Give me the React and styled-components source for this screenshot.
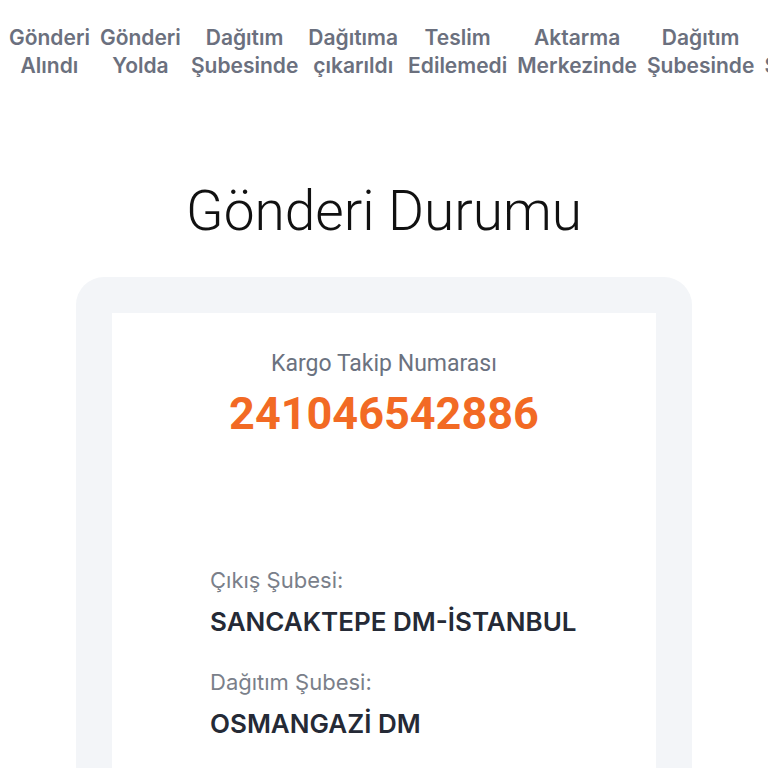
import React from 'react';
import styled, { createGlobalStyle } from 'styled-components';

const GlobalStyle = createGlobalStyle`
  body {
    margin: 0;
    background: #ffffff;
    font-family: 'Inter', 'Noto Sans', sans-serif;
  }
`;

const Page = styled.div`
  width: 768px;
  height: 768px;
  overflow: hidden;
  display: flex;
  flex-direction: column;
`;

const StatusStrip = styled.div`
  display: flex;
  gap: 10px;
  padding: 24px 0 0 9px;
  white-space: nowrap;
`;

const StatusItem = styled.div`
  flex: none;
  text-align: center;
  font-size: 21px;
  font-weight: 600;
  line-height: 28px;
  color: #6b707e;
`;

const Title = styled.h1`
  margin: 99px 0 0;
  text-align: center;
  font-family: 'Roboto', sans-serif;
  font-size: 55px;
  font-weight: 300;
  line-height: 64px;
  color: #111111;
`;

const Frame = styled.div`
  box-sizing: border-box;
  margin: 34px 0 0 76px;
  width: 616px;
  padding: 36px 36px 0;
  background: #f3f5f8;
  border-radius: 28px 28px 0 0;
  flex: 1;
  display: flex;
`;

const Card = styled.div`
  flex: 1;
  background: #ffffff;
  display: flex;
  flex-direction: column;
  padding-top: 36px;
`;

const TrackingLabel = styled.div`
  text-align: center;
  font-family: 'Roboto', sans-serif;
  font-size: 23px;
  color: #6b7280;
  line-height: 30px;
`;

const TrackingNumber = styled.div`
  margin-top: 9px;
  text-align: center;
  font-family: 'Roboto', sans-serif;
  font-size: 45px;
  font-weight: 700;
  color: #f26a24;
  line-height: 52px;
`;

const Details = styled.div`
  margin-top: 125px;
  padding-left: 98px;
  display: flex;
  flex-direction: column;
`;

const DetailLabel = styled.div`
  font-size: 22px;
  color: #7a7f8a;
  line-height: 30px;
  margin-top: ${(props) => (props.first ? '0' : '29px')};
`;

const DetailValue = styled.div`
  margin-top: 11px;
  font-size: 26px;
  font-weight: 600;
  color: #252a36;
  line-height: 32px;
`;

const statuses = [
  ['Gönderi', 'Alındı'],
  ['Gönderi', 'Yolda'],
  ['Dağıtım', 'Şubesinde'],
  ['Dağıtıma', 'çıkarıldı'],
  ['Teslim', 'Edilemedi'],
  ['Aktarma', 'Merkezinde'],
  ['Dağıtım', 'Şubesinde'],
  ['Dağıtım', 'Şubesinde'],
];

const App = () => (
  <Page>
    <GlobalStyle />
    <StatusStrip>
      {statuses.map(([a, b], i) => (
        <StatusItem key={i}>
          {a}
          <br />
          {b}
        </StatusItem>
      ))}
    </StatusStrip>
    <Title>Gönderi Durumu</Title>
    <Frame>
      <Card>
        <TrackingLabel>Kargo Takip Numarası</TrackingLabel>
        <TrackingNumber>241046542886</TrackingNumber>
        <Details>
          <DetailLabel first>Çıkış Şubesi:</DetailLabel>
          <DetailValue>SANCAKTEPE DM-İSTANBUL</DetailValue>
          <DetailLabel>Dağıtım Şubesi:</DetailLabel>
          <DetailValue>OSMANGAZİ DM</DetailValue>
        </Details>
      </Card>
    </Frame>
  </Page>
);

export default App;
